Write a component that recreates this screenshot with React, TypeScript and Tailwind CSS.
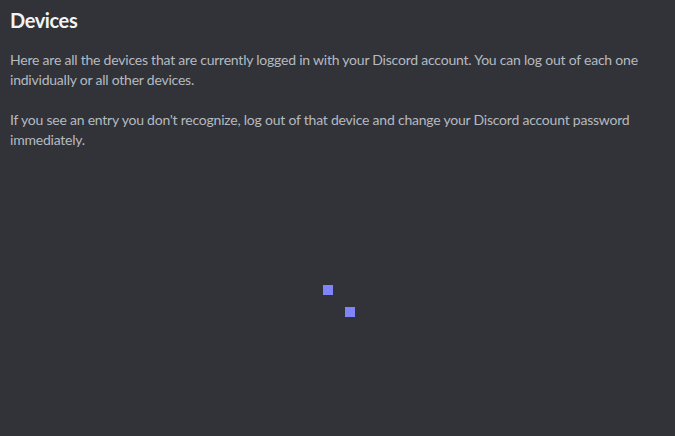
export default function App() {
  return (
    <div className="w-[675px] h-[436px] bg-[#313338] px-[10px] pt-[6px] font-['Lato',sans-serif] flex flex-col">
      <h1 className="text-[20px] leading-[28px] font-bold text-[#f2f3f5] tracking-[-0.4px]">Devices</h1>
      <div className="mt-[16px] text-[14px] leading-[20px] text-[#b5bac1] tracking-[-0.22px] flex flex-col gap-[20px]">
        <p>
          Here are all the devices that are currently logged in with your Discord account. You can log out of each one
          individually or all other devices.
        </p>
        <p>
          If you see an entry you don't recognize, log out of that device and change your Discord account password
          immediately.
        </p>
      </div>
      <div className="flex-1 flex items-start justify-center">
        <div className="relative w-[32px] h-[32px] mt-[135px] ml-[2px]">
          <span className="absolute left-0 top-0 w-[10px] h-[10px] bg-[#7f84f8]" />
          <span className="absolute left-[22px] top-[22px] w-[10px] h-[10px] bg-[#7f84f8]" />
        </div>
      </div>
    </div>
  );
}
